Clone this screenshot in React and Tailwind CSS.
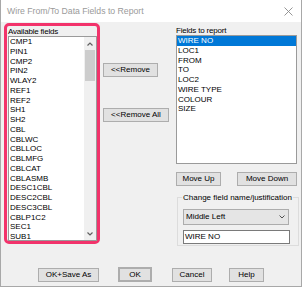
import React from "react";

const leftItems = ["CMP1","PIN1","CMP2","PIN2","WLAY2","REF1","REF2","SH1","SH2","CBL","CBLWC","CBLLOC","CBLMFG","CBLCAT","CBLASMB","DESC1CBL","DESC2CBL","DESC3CBL","CBLP1C2","SEC1","SUB1"];
const rightItems = ["WIRE NO","LOC1","FROM","TO","LOC2","WIRE TYPE","COLOUR","SIZE"];

function Btn({ className = "", children }) {
  return (
    <div className={"flex items-center justify-center bg-[#e1e1e1] border border-[#adadad] text-[8px] leading-none text-black " + className}>
      {children}
    </div>
  );
}

export default function App() {
  return (
    <div className="w-[302px] h-[287px] flex flex-col border-x border-b border-[#a8a8a8] overflow-hidden" style={{ fontFamily: '"Liberation Sans", Arial, sans-serif' }}>
      <div className="h-[22px] bg-white flex items-center justify-between pl-[6px] pr-[8px] shrink-0">
        <span className="text-[8.7px] text-[#9a9a9a] leading-none">Wire From/To Data Fields to Report</span>
        <svg width="9" height="9" viewBox="0 0 9 9">
          <path d="M0.5 0.5 L8.5 8.5 M8.5 0.5 L0.5 8.5" stroke="#8a8a8a" strokeWidth="0.9" fill="none" />
        </svg>
      </div>
      <div className="flex-1 bg-[#f0f0f0] flex flex-col">
        <div className="flex items-start">
          {/* Left column */}
          <div className="ml-[3px] mt-[1px] w-[96px] h-[221px] border-[3px] border-[#f2336b] rounded-[5px] pl-[1px] flex flex-col">
            <div className="h-[10px] text-[8px] leading-[10px] text-black pt-[1px] whitespace-nowrap tracking-[-0.2px]">Available fields</div>
            <div className="w-[89px] h-[205px] border border-[#9a9a9a] bg-white flex overflow-hidden">
              <div className="flex-1 pl-[1px] overflow-hidden">
                {leftItems.map((t) => (
                  <div key={t} className="h-[9.75px] leading-[9.75px] text-[8px] text-black whitespace-nowrap">{t}</div>
                ))}
              </div>
              <div className="w-[12px] bg-[#f0f0f0] flex flex-col items-center">
                <div className="h-[13px] w-full flex items-center justify-center">
                  <svg width="6" height="4" viewBox="0 0 6 4"><path d="M0.5 3.5 L3 1 L5.5 3.5" stroke="#606060" strokeWidth="1.2" fill="none" /></svg>
                </div>
                <div className="w-[10px] h-[31px] bg-[#cdcdcd]" />
                <div className="flex-1" />
                <div className="h-[13px] w-full flex items-center justify-center">
                  <svg width="6" height="4" viewBox="0 0 6 4"><path d="M0.5 0.5 L3 3 L5.5 0.5" stroke="#606060" strokeWidth="1.2" fill="none" /></svg>
                </div>
              </div>
            </div>
          </div>
          {/* Middle column */}
          <div className="ml-[3px] w-[66px] pt-[41px] flex flex-col">
            <Btn className="w-[55px] h-[14px]">&lt;&lt;Remove</Btn>
            <Btn className="w-[66px] h-[14px] mt-[31px]">&lt;&lt;Remove All</Btn>
          </div>
          {/* Right column */}
          <div className="ml-[7px] w-[121px] pt-[5px] flex flex-col">
            <div className="h-[8px] text-[8px] leading-[8px] text-black whitespace-nowrap tracking-[-0.2px]">Fields to report</div>
            <div className="h-[129px] border border-[#9a9a9a] bg-white overflow-hidden">
              {rightItems.map((t, i) => (
                <div key={t} className={"h-[9.75px] leading-[9.75px] text-[8px] pl-[1px] whitespace-nowrap " + (i === 0 ? "bg-[#0078d7] text-white" : "text-black")}>{t}</div>
              ))}
            </div>
            <div className="mt-[8px] flex justify-between">
              <Btn className="w-[45px] h-[14px]">Move Up</Btn>
              <Btn className="w-[60px] h-[14px]">Move Down</Btn>
            </div>
            <fieldset className="ml-[1px] mt-[7px] border border-[#dcdcdc] px-[5px] pb-[1px] pt-[7px]">
              <legend className="text-[8px] leading-[9px] text-black px-[1px] -ml-[1px] whitespace-nowrap">Change field name/justification</legend>
              <div className="w-[106px] h-[16px] bg-[#e5e5e5] border border-[#acacac] flex items-center justify-between pl-[2px] pr-[3px]">
                <span className="text-[8px] leading-none text-black">Middle Left</span>
                <svg width="6" height="4" viewBox="0 0 6 4"><path d="M0.5 0.5 L3 3 L5.5 0.5" stroke="#404040" strokeWidth="0.9" fill="none" /></svg>
              </div>
              <div className="mt-[5px] w-[107px] h-[14px] bg-white border border-[#7a7a7a] flex items-center pl-[1px]">
                <span className="text-[8px] leading-none text-black">WIRE NO</span>
              </div>
            </fieldset>
          </div>
        </div>
        <div className="mt-[21px] flex items-center">
          <Btn className="ml-[37px] w-[61px] h-[14px]">OK+Save As</Btn>
          <Btn className="ml-[19px] w-[34px] h-[15px] border-2 border-[#2b87dc]">OK</Btn>
          <Btn className="ml-[20px] w-[40px] h-[14px]">Cancel</Btn>
          <Btn className="ml-[17px] w-[35px] h-[14px]">Help</Btn>
        </div>
      </div>
    </div>
  );
}
